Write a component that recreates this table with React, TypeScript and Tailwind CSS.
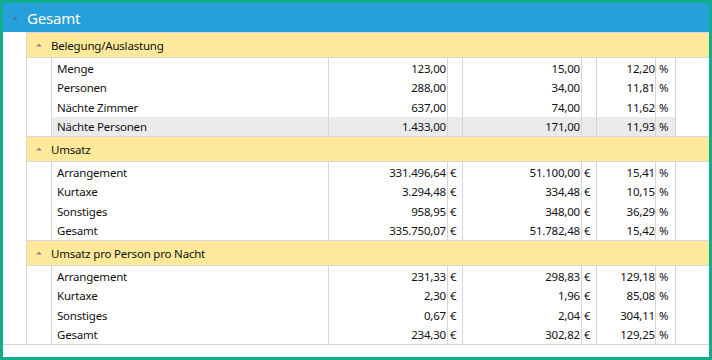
import React from "react";

type Row = {
  label: string;
  a: string;
  b: string;
  pct: string;
  unit?: string;
  hl?: boolean;
};

type Group = { title: string; rows: Row[] };

const groups: Group[] = [
  {
    title: "Belegung/Auslastung",
    rows: [
      { label: "Menge", a: "123,00", b: "15,00", pct: "12,20" },
      { label: "Personen", a: "288,00", b: "34,00", pct: "11,81" },
      { label: "Nächte Zimmer", a: "637,00", b: "74,00", pct: "11,62" },
      { label: "Nächte Personen", a: "1.433,00", b: "171,00", pct: "11,93", hl: true },
    ],
  },
  {
    title: "Umsatz",
    rows: [
      { label: "Arrangement", a: "331.496,64", b: "51.100,00", pct: "15,41", unit: "€" },
      { label: "Kurtaxe", a: "3.294,48", b: "334,48", pct: "10,15", unit: "€" },
      { label: "Sonstiges", a: "958,95", b: "348,00", pct: "36,29", unit: "€" },
      { label: "Gesamt", a: "335.750,07", b: "51.782,48", pct: "15,42", unit: "€" },
    ],
  },
  {
    title: "Umsatz pro Person pro Nacht",
    rows: [
      { label: "Arrangement", a: "231,33", b: "298,83", pct: "129,18", unit: "€" },
      { label: "Kurtaxe", a: "2,30", b: "1,96", pct: "85,08", unit: "€" },
      { label: "Sonstiges", a: "0,67", b: "2,04", pct: "304,11", unit: "€" },
      { label: "Gesamt", a: "234,30", b: "302,82", pct: "129,25", unit: "€" },
    ],
  },
];

function Caret({ className }: { className: string }) {
  return (
    <svg width="6" height="4" viewBox="0 0 6 4" className={className}>
      <path d="M0 3.5 L3 0.5 L6 3.5 Z" fill="currentColor" />
    </svg>
  );
}

function DataRow({ row }: { row: Row }) {
  const bg = row.hl ? "bg-[#ebebeb]" : "";
  return (
    <div className="grid h-[19.5px] grid-cols-[277px_119px_15px_119px_15px_59px_20px_1fr] items-stretch">
      <div className={`${bg} flex items-center border-r border-[#d6d6d6] pl-[5px] pt-[1px]`}>{row.label}</div>
      <div className={`${bg} flex items-center justify-end border-r border-[#d6d6d6] pr-[1px] pt-[1px]`}>{row.a}</div>
      <div className={`${bg} flex items-center border-r border-[#d6d6d6] pl-[2px] pt-[1px]`}>{row.unit}</div>
      <div className={`${bg} flex items-center justify-end border-r border-[#d6d6d6] pr-[1px] pt-[1px]`}>{row.b}</div>
      <div className={`${bg} flex items-center border-r border-[#d6d6d6] pl-[2px] pt-[1px]`}>{row.unit}</div>
      <div className={`${bg} flex items-center justify-end border-r border-[#d6d6d6] pt-[1px]`}>{row.pct}</div>
      <div className={`${bg} flex items-center border-r border-[#d6d6d6] pl-[3px] pt-[1px]`}>%</div>
      <div />
    </div>
  );
}

export default function App() {
  return (
    <div className="h-[360px] w-[712px] overflow-hidden border-[3px] border-[#12ad8a] bg-white font-['Noto_Sans',sans-serif] text-[11.5px] tracking-[-0.2px] text-[#111]">
      {/* Gesamt header */}
      <div className="flex h-[29px] items-center bg-[#279fdb] text-white">
        <Caret className="ml-[9px] mr-[9px] text-[#4f6f8f]" />
        <span className="pt-[1px] text-[15px] leading-none tracking-[-0.2px]">Gesamt</span>
      </div>

      <div className="flex">
        <div className="w-[24px] border-r border-[#d6d6d6]" />
        <div className="flex-1">
          {groups.map((g) => (
            <div key={g.title}>
              <div className="flex h-[26px] items-center border-y border-[#d6d6d6] bg-[#fee99b] text-[#111]">
                <Caret className="ml-[9px] mr-[9px] text-[#8a8a8a]" />
                <span className="pt-[1px]">{g.title}</span>
              </div>
              <div className="flex">
                <div className="w-[25px] border-r border-[#d6d6d6]" />
                <div className="flex-1">
                  {g.rows.map((r) => (
                    <DataRow key={r.label} row={r} />
                  ))}
                </div>
              </div>
            </div>
          ))}
        </div>
      </div>
      <div className="border-t border-[#d6d6d6]" />
    </div>
  );
}
